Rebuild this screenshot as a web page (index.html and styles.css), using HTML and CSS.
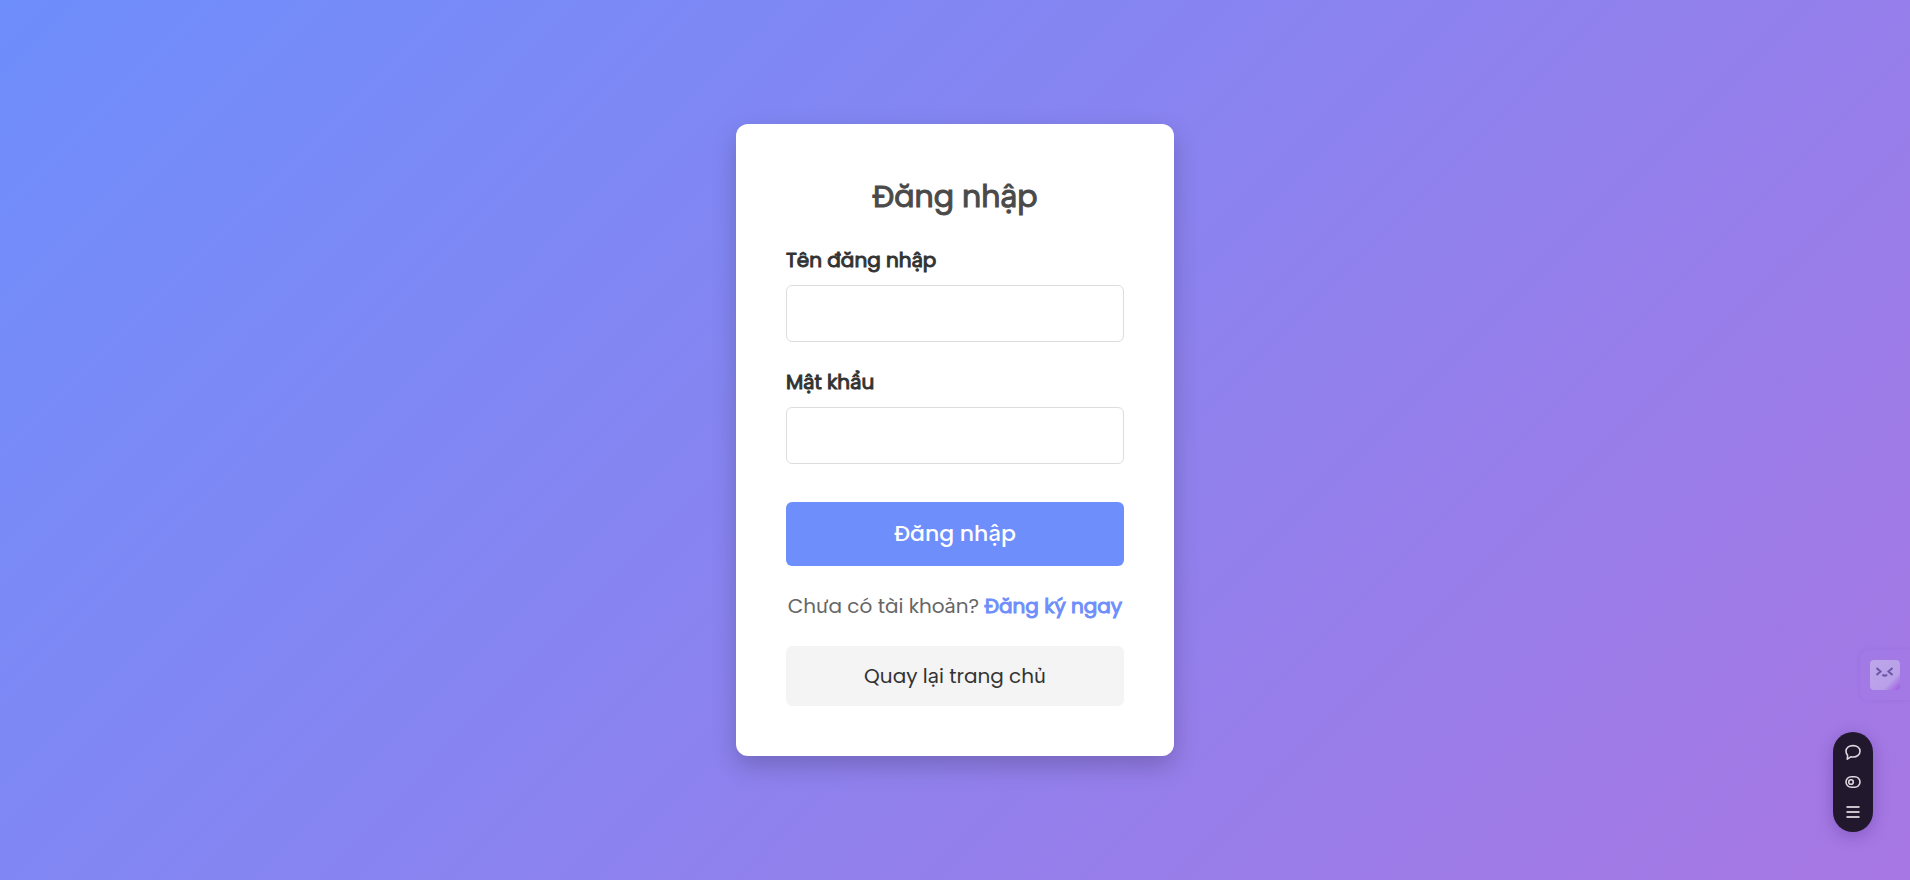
FILE: index.html
```html
<!DOCTYPE html>
<html lang="vi">
<head>
<meta charset="utf-8">
<meta name="viewport" content="width=device-width, initial-scale=1">
<title>Đăng nhập</title>
<link rel="stylesheet" href="styles.css">
</head>
<body>
<main class="card">
  <h1 class="title">Đăng nhập</h1>
  <form class="form">
    <div class="field">
      <label class="label" for="username">Tên đăng nhập</label>
      <input class="input" id="username" name="username" type="text">
    </div>
    <div class="field">
      <label class="label" for="password">Mật khẩu</label>
      <input class="input" id="password" name="password" type="password">
    </div>
    <button class="submit" type="submit">Đăng nhập</button>
  </form>
  <p class="register">Chưa có tài khoản? <a class="register-link" href="#">Đăng ký ngay</a></p>
  <a class="home" href="#">Quay lại trang chủ</a>
</main>

<aside class="assistant">
  <button class="face" type="button" aria-label="Trợ lý">
    <svg width="30" height="30" viewBox="0 0 30 30" fill="none" stroke="#6c56a4" stroke-width="2">
      <path d="M6.500 8l4 3.500-4 3.500M22.500 8l-4 3.500 4 3.500M12.500 14.500q2.200 2.500 4.500 0"/>
    </svg>
  </button>
</aside>

<nav class="toolbar" aria-label="Công cụ">
  <button class="tool" type="button" aria-label="Bình luận">
    <svg width="18" height="18" viewBox="0 0 18 18" fill="none" stroke="#dcd8e0" stroke-width="1.600" stroke-linejoin="round">
      <path d="M3.300 16.200L3.600 12.200C2.500 11 2 9.800 2 8.300C2 4.900 5 2.600 9 2.600S16 4.900 16 8.200S13 14 9.300 14C8.500 14 7.800 13.900 7.100 13.700Z"/>
    </svg>
  </button>
  <button class="tool" type="button" aria-label="Chuyển đổi">
    <svg width="18" height="18" viewBox="0 0 18 18" fill="none" stroke="#dcd8e0" stroke-width="1.600">
      <rect x="2" y="3.700" width="14" height="10.600" rx="5.300"/>
      <circle cx="7" cy="9" r="2.300"/>
    </svg>
  </button>
  <button class="tool" type="button" aria-label="Menu">
    <svg width="18" height="18" viewBox="0 0 18 18" fill="none" stroke="#c8c3cd" stroke-width="1.800">
      <path d="M2.500 4H15.500M2.500 9H15.500M2.500 14H15.500"/>
    </svg>
  </button>
</nav>
</body>
</html>
```
FILE: styles.css
```css
* {
  box-sizing: border-box;
}

body {
  margin: 0;
  min-height: 100vh;
  display: flex;
  align-items: center;
  justify-content: center;
  background: linear-gradient(135deg, #6e8efb, #a777e3);
  font-family: Poppins, Inter, "Noto Sans", sans-serif;
  font-size: 20px;
  line-height: 32px;
  color: #333;
}

button,
input {
  font-family: inherit;
}

.card {
  width: 100%;
  max-width: 438px;
  padding: 50px;
  background: #fff;
  border-radius: 12px;
  box-shadow: 0 10px 25px rgba(0, 0, 0, 0.2);
  text-align: center;
}

.title,
.label,
.register-link {
  font-weight: 400;
  -webkit-text-stroke: 1px currentColor;
}

.title {
  margin: 0 0 24px;
  font-size: 30px;
  line-height: 46px;
  color: #4a4a4a;
}

.form {
  display: flex;
  flex-direction: column;
  gap: 24px;
}

.field {
  display: flex;
  flex-direction: column;
  gap: 9px;
  text-align: left;
}

.input {
  width: 100%;
  padding: 12px 15px;
  font-size: 20px;
  line-height: 31px;
  height: 57px;
  border: 1px solid #ddd;
  border-radius: 6px;
  background: #fff;
  color: #333;
}

.submit {
  margin-top: 14px;
  padding: 16px;
  border: 0;
  border-radius: 6px;
  background: #6e8efb;
  color: #fff;
  font-size: 22px;
  font-weight: 500;
  line-height: 32px;
}

.register {
  margin: 24px 0;
  color: #666;
  white-space: nowrap;
}

.register-link {
  color: #6e8efb;
  text-decoration: none;
}

.home {
  display: block;
  padding: 14px;
  border-radius: 6px;
  background: #f4f4f4;
  color: #333;
  text-decoration: none;
}

.assistant {
  position: fixed;
  right: 0;
  bottom: 180px;
  padding: 10px;
  border-radius: 8px 0 0 8px;
  box-shadow: 0 0 4px rgba(90, 50, 180, 0.12);
}

.face {
  display: block;
  padding: 0;
  border: 0;
  border-radius: 4px;
  background: linear-gradient(135deg, #bda6ea 0%, #b9a0e9 70%, #9e60e0 96%);
}

.face svg,
.tool svg {
  display: block;
}

.toolbar {
  position: fixed;
  right: 37px;
  bottom: 48px;
  padding: 11px;
  display: flex;
  flex-direction: column;
  gap: 12px;
  border-radius: 20px;
  background: #22182e;
  box-shadow: 0 4px 16px rgba(40, 10, 90, 0.25);
}

.tool {
  padding: 0;
  border: 0;
  background: none;
}
```
